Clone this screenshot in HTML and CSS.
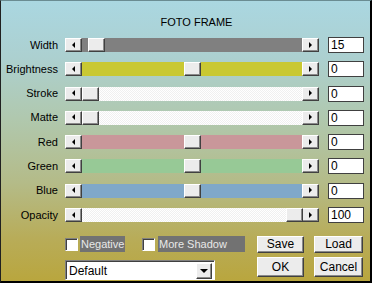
FILE: index.html
```html
<!DOCTYPE html>
<html lang="en">
<head>
    <meta charset="UTF-8">
    <title>Foto Frame</title>
    <link rel="stylesheet" href="styles.css">
</head>
<body>
    <div class="frame">
        <h1 class="title">FOTO FRAME</h1>

        <!-- Sliders -->
        <div class="rows">
            <div class="row">
                <span class="label">Width</span>
                <div class="slider">
                    <span class="arrow arrow-left"></span>
                    <div class="track track-gray"><span class="thumb" style="left: 6px"></span></div>
                    <span class="arrow arrow-right"></span>
                </div>
                <span class="value">15</span>
            </div>
            <div class="row">
                <span class="label">Brightness</span>
                <div class="slider">
                    <span class="arrow arrow-left"></span>
                    <div class="track track-yellow"><span class="thumb" style="left: 102px"></span></div>
                    <span class="arrow arrow-right"></span>
                </div>
                <span class="value">0</span>
            </div>
            <div class="row">
                <span class="label">Stroke</span>
                <div class="slider">
                    <span class="arrow arrow-left"></span>
                    <div class="track track-white"><span class="thumb" style="left: 0px"></span></div>
                    <span class="arrow arrow-right"></span>
                </div>
                <span class="value">0</span>
            </div>
            <div class="row">
                <span class="label">Matte</span>
                <div class="slider">
                    <span class="arrow arrow-left"></span>
                    <div class="track track-white"><span class="thumb" style="left: 0px"></span></div>
                    <span class="arrow arrow-right"></span>
                </div>
                <span class="value">0</span>
            </div>
            <div class="row">
                <span class="label">Red</span>
                <div class="slider">
                    <span class="arrow arrow-left"></span>
                    <div class="track track-red"><span class="thumb" style="left: 102px"></span></div>
                    <span class="arrow arrow-right"></span>
                </div>
                <span class="value">0</span>
            </div>
            <div class="row">
                <span class="label">Green</span>
                <div class="slider">
                    <span class="arrow arrow-left"></span>
                    <div class="track track-green"><span class="thumb" style="left: 102px"></span></div>
                    <span class="arrow arrow-right"></span>
                </div>
                <span class="value">0</span>
            </div>
            <div class="row">
                <span class="label">Blue</span>
                <div class="slider">
                    <span class="arrow arrow-left"></span>
                    <div class="track track-blue"><span class="thumb" style="left: 102px"></span></div>
                    <span class="arrow arrow-right"></span>
                </div>
                <span class="value">0</span>
            </div>
            <div class="row">
                <span class="label">Opacity</span>
                <div class="slider">
                    <span class="arrow arrow-left"></span>
                    <div class="track track-white"><span class="thumb" style="left: 204px"></span></div>
                    <span class="arrow arrow-right"></span>
                </div>
                <span class="value">100</span>
            </div>
        </div>

        <!-- Options and buttons -->
        <div class="options">
            <span class="checkbox"></span>
            <span class="check-label check-negative">Negative</span>
            <span class="checkbox"></span>
            <span class="check-label check-shadow">More Shadow</span>
            <button class="btn btn-small">Save</button>
            <button class="btn btn-small">Load</button>
        </div>
        <div class="actions">
            <div class="dropdown">
                <span class="dropdown-text">Default</span>
                <span class="dropdown-btn"><span class="down"></span></span>
            </div>
            <button class="btn btn-big">OK</button>
            <button class="btn btn-big">Cancel</button>
        </div>
    </div>
</body>
</html>
```

FILE: styles.css
```css
* {
    box-sizing: border-box;
    margin: 0;
    padding: 0;
}

body {
    font-family: "Liberation Sans", Arial, sans-serif;
    font-size: 11px;
    color: #000;
    background-color: #b8a43a;
}

.frame {
    width: 372px;
    height: 283px;
    border-left: 1px solid #202020;
    border-top: 1px solid #6a8c92;
    border-right: 2px solid #000;
    border-bottom: 2px solid #000;
    background: linear-gradient(#aad7e1 0%, #acd0d0 20%, #b0c8ae 42%, #b4bb88 65%, #b8ac58 85%, #b9a63e 100%);
    padding-top: 15px;
    overflow: hidden;
}

.title {
    font-size: 11px;
    font-weight: normal;
    line-height: 13px;
    text-align: center;
    padding-left: 22px;
}

.rows {
    margin-top: 8px;
    display: flex;
    flex-direction: column;
    gap: 8.3px;
}

.row {
    display: flex;
    align-items: center;
    height: 16px;
}

.label {
    width: 57px;
    text-align: right;
    margin-right: 7px;
    line-height: 13px;
}

.slider {
    display: flex;
    height: 14px;
    width: 254px;
}

.arrow {
    width: 17px;
    height: 14px;
    background-color: #ececec;
    border: 1px solid;
    border-color: #fff #404040 #404040 #fff;
    box-shadow: inset -1px -1px #8a8a8a;
    display: flex;
    align-items: center;
    justify-content: center;
}

.arrow::after {
    content: "";
    border-top: 3px solid transparent;
    border-bottom: 3px solid transparent;
    margin-top: -1px;
}

.arrow-left::after {
    border-right: 3px solid #000;
    margin-left: -1px;
}

.arrow-right::after {
    border-left: 3px solid #000;
    margin-left: 0;
}

.track {
    position: relative;
    flex: 1;
    height: 14px;
}

.track-gray {
    background-color: #808080;
}

.track-yellow {
    background-color: #c9c832;
}

.track-red {
    background-color: #c9979a;
}

.track-green {
    background-color: #97c996;
}

.track-blue {
    background-color: #80a8c9;
}

.track-white {
    background-color: #fafafa;
    background-image: repeating-conic-gradient(#f0f0f0 0 25%, #ffffff 0 50%);
    background-size: 2px 2px;
}

.thumb {
    position: absolute;
    top: 0;
    width: 17px;
    height: 14px;
    background-color: #ececec;
    border: 1px solid;
    border-color: #fff #404040 #404040 #fff;
    box-shadow: inset -1px -1px #8a8a8a;
}

.value {
    margin-left: 9px;
    width: 36px;
    height: 16px;
    background-color: #fff;
    border: 1px solid #404040;
    padding-left: 2px;
    font-size: 12px;
    line-height: 14px;
}

.options {
    display: flex;
    align-items: center;
    margin-top: 13px;
    padding-left: 64px;
    height: 16px;
}

.checkbox {
    width: 13px;
    height: 13px;
    background-color: #fff;
    border: 1px solid;
    border-color: #808080 #fff #fff #808080;
    box-shadow: inset 1px 1px #404040;
}

.check-label {
    margin-left: 2px;
    background-color: #727272;
    color: #e8e8e8;
    height: 16px;
    line-height: 16px;
    padding-left: 1px;
}

.check-negative {
    width: 45px;
    margin-right: 17px;
}

.check-shadow {
    width: 87px;
    margin-right: 12px;
    margin-left: 3px;
}

.btn {
    font-family: "Liberation Sans", Arial, sans-serif;
    font-size: 12px;
    color: #000;
    background-color: #ececec;
    border: 1px solid;
    border-color: #fff #404040 #404040 #fff;
    box-shadow: inset -1px -1px #8a8a8a;
}

.btn-small {
    width: 47px;
    height: 17px;
    line-height: 14px;
}

.btn-small + .btn-small {
    margin-left: 10px;
    width: 49px;
}

.actions {
    display: flex;
    align-items: flex-start;
    margin-top: 5px;
    padding-left: 64px;
}

.dropdown {
    display: flex;
    align-items: center;
    justify-content: space-between;
    width: 150px;
    height: 20px;
    margin-top: 3px;
    margin-right: 42px;
    background-color: #fff;
    border: 1px solid;
    border-color: #808080 #fff #fff #808080;
    box-shadow: inset 1px 1px #404040;
    padding: 2px 2px 1px 3px;
}

.dropdown-text {
    font-size: 12px;
    line-height: 14px;
}

.dropdown-btn {
    width: 16px;
    height: 16px;
    background-color: #ececec;
    border: 1px solid;
    border-color: #fff #404040 #404040 #fff;
    box-shadow: inset -1px -1px #8a8a8a;
    display: flex;
    align-items: center;
    justify-content: center;
}

.down {
    border-left: 4px solid transparent;
    border-right: 4px solid transparent;
    border-top: 4px solid #000;
}

.btn-big {
    width: 47px;
    height: 20px;
    line-height: 16px;
}

.btn-big + .btn-big {
    margin-left: 10px;
    width: 49px;
}
```
